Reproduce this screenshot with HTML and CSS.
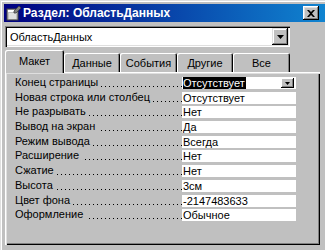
FILE: index.html
```html
<!DOCTYPE html>
<html lang="ru">
<head>
    <meta charset="UTF-8">
    <title>Раздел: ОбластьДанных</title>
    <link rel="stylesheet" href="styles.css">
</head>
<body>

    <div class="window">
        <div class="titlebar">
            <svg class="title-icon" width="16" height="16" viewBox="0 0 16 16">
                <rect x="1" y="4" width="11" height="11" fill="#c0c0c0" stroke="#404040" stroke-width="1"/>
                <rect x="2" y="5" width="9" height="2" fill="#fff"/>
                <line x1="3" y1="9" x2="10" y2="9" stroke="#fff"/>
                <line x1="3" y1="11" x2="10" y2="11" stroke="#fff"/>
                <line x1="3" y1="13" x2="10" y2="13" stroke="#fff"/>
                <path d="M8 6 L13 1 L15 3 L10 8 L8 8 Z" fill="#808080" stroke="#404040" stroke-width="0.8"/>
            </svg>
            <span class="title">Раздел: ОбластьДанных</span>
            <span class="close-btn">
                <svg width="8" height="7" viewBox="0 0 8 7">
                    <path d="M0 0h2l2 2 2-2h2L5 3.5 8 7H6L4 5 2 7H0l3-3.5z" fill="#000"/>
                </svg>
            </span>
        </div>

        <div class="combo">
            <span class="combo-text">ОбластьДанных</span>
            <span class="drop-btn">
                <svg width="7" height="4" viewBox="0 0 7 4"><path d="M0 0h7L3.5 4z" fill="#000"/></svg>
            </span>
        </div>

        <div class="tabs">
            <div class="tab active">Макет</div>
            <div class="tab">Данные</div>
            <div class="tab">События</div>
            <div class="tab">Другие</div>
            <div class="tab">Все</div>
        </div>

        <div class="panel">
            <div class="row">
                <div class="prop"><span>Конец страницы</span></div>
                <div class="value">
                    <span class="selected">Отсутствует</span>
                    <span class="drop-btn small">
                        <svg width="5" height="3" viewBox="0 0 5 3"><path d="M0 0h5L2.5 3z" fill="#000"/></svg>
                    </span>
                </div>
            </div>
            <div class="row">
                <div class="prop"><span>Новая строка или столбец</span></div>
                <div class="value">Отсутствует</div>
            </div>
            <div class="row">
                <div class="prop"><span>Не разрывать</span></div>
                <div class="value">Нет</div>
            </div>
            <div class="row">
                <div class="prop"><span>Вывод на экран</span></div>
                <div class="value">Да</div>
            </div>
            <div class="row">
                <div class="prop"><span>Режим вывода</span></div>
                <div class="value">Всегда</div>
            </div>
            <div class="row">
                <div class="prop"><span>Расширение</span></div>
                <div class="value">Нет</div>
            </div>
            <div class="row">
                <div class="prop"><span>Сжатие</span></div>
                <div class="value">Нет</div>
            </div>
            <div class="row">
                <div class="prop"><span>Высота</span></div>
                <div class="value">3см</div>
            </div>
            <div class="row">
                <div class="prop"><span>Цвет фона</span></div>
                <div class="value">-2147483633</div>
            </div>
            <div class="row">
                <div class="prop"><span>Оформление</span></div>
                <div class="value">Обычное</div>
            </div>
        </div>
    </div>

</body>
</html>
```

FILE: styles.css
```css
body {
    margin: 0;
    background-color: #c0c0c0;
    font-family: "Liberation Sans", Arial, sans-serif;
    font-size: 11px;
    color: #000;
}
.window {
    width: 325px;
    height: 250px;
    box-sizing: border-box;
    padding: 4px 0 0 4px;
    background-color: #c0c0c0;
    box-shadow: inset 1px 1px #dfdfdf, inset 2px 2px #fff;
    overflow: hidden;
}
.titlebar {
    height: 18px;
    display: flex;
    align-items: center;
    padding-left: 2px;
    background: linear-gradient(to right, #000080, #1084d0);
    color: #fff;
    font-weight: bold;
    font-size: 12px;
}
.title-icon {
    flex: none;
}
.title {
    margin-left: 1px;
}
.close-btn {
    margin-left: auto;
    margin-right: 6px;
    width: 16px;
    height: 14px;
    display: flex;
    align-items: center;
    justify-content: center;
    background-color: #c0c0c0;
    box-shadow: inset -1px -1px #000, inset 1px 1px #fff, inset -2px -2px #808080, inset 2px 2px #dfdfdf;
}
.combo {
    margin: 4px 0 0 1px;
    width: 285px;
    height: 21px;
    box-sizing: border-box;
    display: flex;
    align-items: center;
    padding: 2px 2px 2px 5px;
    background-color: #fff;
    box-shadow: inset 1px 1px #808080, inset 2px 2px #000, inset -1px -1px #fff, inset -2px -2px #dfdfdf;
    font-size: 11px;
}
.drop-btn {
    margin-left: auto;
    width: 16px;
    height: 17px;
    display: flex;
    align-items: center;
    justify-content: center;
    background-color: #c0c0c0;
    box-shadow: inset -1px -1px #000, inset 1px 1px #dfdfdf, inset -2px -2px #808080, inset 2px 2px #fff;
}
.drop-btn.small {
    width: 13px;
    height: 10px;
    margin-right: 2px;
    box-shadow: inset -1px -1px #000, inset 1px 1px #fff, inset -2px -2px #808080;
}
.tabs {
    margin: 3px 0 0 1px;
    height: 22px;
    display: flex;
    align-items: flex-end;
    position: relative;
    z-index: 1;
}
.tab {
    width: 56px;
    height: 19px;
    box-sizing: border-box;
    display: flex;
    align-items: center;
    justify-content: center;
    padding-top: 1px;
    border-top-left-radius: 2px;
    border-top-right-radius: 2px;
    background-color: #c0c0c0;
    box-shadow: inset 1px 1px #fff, inset -1px 0 #000, inset -2px 0 #808080;
}
.tab:nth-child(3),
.tab:nth-child(5) {
    width: 57px;
}
.tab.active {
    width: 59px;
    height: 23px;
    margin-bottom: -1px;
    padding-top: 0;
    padding-bottom: 2px;
}
.panel {
    margin-left: 1px;
    width: 315px;
    height: 173px;
    box-sizing: border-box;
    padding: 4px 0 0 10px;
    background-color: #c0c0c0;
    box-shadow: inset 1px 1px #fff, inset 2px 2px #dfdfdf, inset -1px -1px #000, inset -2px -2px #808080;
}
.row {
    height: 14.7px;
    display: flex;
}
.prop {
    width: 167px;
    height: 14px;
    line-height: 13px;
    white-space: nowrap;
    overflow: hidden;
    background-image: linear-gradient(to right, #000 1px, transparent 1px);
    background-size: 4px 1px;
    background-position: 2px 10px;
    background-repeat: repeat-x;
}
.prop span {
    background-color: #c0c0c0;
    padding-right: 3px;
}
.value {
    width: 114px;
    height: 12px;
    margin-top: 1px;
    box-sizing: border-box;
    padding-left: 1px;
    line-height: 12px;
    background-color: #fff;
    display: flex;
    align-items: center;
    white-space: nowrap;
}
.selected {
    background-color: #000;
    color: #fff;
    padding-right: 1px;
}
```
